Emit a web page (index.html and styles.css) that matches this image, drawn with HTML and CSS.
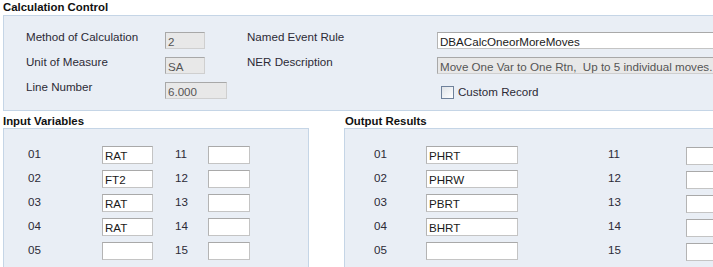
FILE: index.html
```html
<!DOCTYPE html>
<html lang="en">
<head>
    <meta charset="UTF-8">
    <title>Calculation Control</title>
    <link rel="stylesheet" href="styles.css">
</head>
<body>
    <div class="calc-section">
        <h3 class="section-title">Calculation Control</h3>
        <div class="panel calc-panel">
            <label class="field-label">Method of Calculation</label>
            <input class="box box-short" type="text" value="2" disabled>
            <label class="field-label">Named Event Rule</label>
            <input class="box box-wide" type="text" value="DBACalcOneorMoreMoves">

            <label class="field-label">Unit of Measure</label>
            <input class="box box-short" type="text" value="SA" disabled>
            <label class="field-label">NER Description</label>
            <input class="box box-wide" type="text" value="Move One Var to One Rtn,  Up to 5 individual moves." disabled>

            <label class="field-label">Line Number</label>
            <input class="box box-num" type="text" value="6.000" disabled>
            <span></span>
            <label class="check-row">
                <input class="check" type="checkbox">
                <span>Custom Record</span>
            </label>
        </div>
    </div>

    <div class="var-sections">
        <div class="var-col input-col">
            <h3 class="section-title var-title">Input Variables</h3>
            <div class="panel var-panel input-panel">
                <span class="num">01</span><input class="box" type="text" value="RAT"><span class="num">11</span><input class="box" type="text">
                <span class="num">02</span><input class="box" type="text" value="FT2"><span class="num">12</span><input class="box" type="text">
                <span class="num">03</span><input class="box" type="text" value="RAT"><span class="num">13</span><input class="box" type="text">
                <span class="num">04</span><input class="box" type="text" value="RAT"><span class="num">14</span><input class="box" type="text">
                <span class="num">05</span><input class="box" type="text"><span class="num">15</span><input class="box" type="text">
            </div>
        </div>

        <div class="var-col output-col">
            <h3 class="section-title var-title">Output Results</h3>
            <div class="panel var-panel output-panel">
                <span class="num">01</span><input class="box" type="text" value="PHRT"><span class="num">11</span><input class="box" type="text">
                <span class="num">02</span><input class="box" type="text" value="PHRW"><span class="num">12</span><input class="box" type="text">
                <span class="num">03</span><input class="box" type="text" value="PBRT"><span class="num">13</span><input class="box" type="text">
                <span class="num">04</span><input class="box" type="text" value="BHRT"><span class="num">14</span><input class="box" type="text">
                <span class="num">05</span><input class="box" type="text"><span class="num">15</span><input class="box" type="text">
            </div>
        </div>
    </div>
</body>
</html>
```

FILE: styles.css
```css
html, body {
    margin: 0;
    padding: 0;
    overflow: hidden;
    background: #ffffff;
}

body {
    font-family: 'Liberation Sans', Arial, sans-serif;
    font-size: 11.6px;
    color: #2c2a36;
    width: 713px;
    height: 267px;
}

.section-title {
    margin: 0 0 0 3px;
    font-size: 11.4px;
    font-weight: bold;
    line-height: 15px;
    color: #111;
}

.panel {
    background-color: #e9eef5;
    border: 1px solid #c5d5e6;
    box-sizing: border-box;
}

/* calculation control */
.calc-panel {
    margin-left: 3px;
    width: 760px;
    height: 96px;
    padding: 14px 0 0 22px;
    display: grid;
    grid-template-columns: 139px 82px 190px 300px;
    grid-auto-rows: 25px;
    align-items: start;
}

.field-label {
    line-height: 14px;
}

.box {
    font-family: 'Liberation Sans', Arial, sans-serif;
    font-size: 11.6px;
    color: #1a1a1a;
    height: 18px;
    margin: 0;
    padding: 1px 2px 0;
    box-sizing: border-box;
    background: #ffffff;
    border: 1px solid #c4c4c4;
    border-top-color: #a9a9a9;
    border-left-color: #b4b4b4;
    outline: none;
}

.calc-panel .box {
    margin-top: 2px;
    height: 17px;
}

.box:disabled {
    background: #e8e8e8;
    color: #555;
    border-color: #cfcfcf;
    border-top-color: #a8a8a8;
    border-left-color: #a8a8a8;
}

.box-short {
    width: 40px;
}

.box-num {
    width: 62px;
}

.box-wide {
    width: 290px;
}

.check-row {
    display: flex;
    align-items: center;
    gap: 4px;
    margin: 5px 0 0 4px;
    line-height: 14px;
}

.check {
    appearance: none;
    -webkit-appearance: none;
    width: 13px;
    height: 13px;
    margin: 0;
    border: 1px solid #6f819a;
    background: linear-gradient(135deg, #dfe3e8, #ffffff);
    box-sizing: border-box;
}

/* variables */
.var-sections {
    display: flex;
    margin-top: 4px;
}

.var-col {
    flex-shrink: 0;
}

.var-title {
    line-height: 13px;
    margin-left: 0;
}

.input-col {
    margin-left: 3px;
    width: 306px;
}

.output-col {
    margin-left: 35px;
    width: 420px;
}

.output-col .var-title {
    margin-left: 1px;
}

.var-panel {
    height: 150px;
    padding-top: 17px;
    display: grid;
    grid-auto-rows: 24px;
    align-items: start;
}

.input-panel {
    padding-left: 24px;
    grid-template-columns: 74px 73px 33px 42px;
}

.input-panel .box:nth-of-type(odd) {
    width: 51px;
}

.input-panel .box:nth-of-type(even) {
    width: 42px;
}

.output-panel {
    padding-left: 29px;
    grid-template-columns: 52px 182px 78px 60px;
}

.output-panel .box:nth-of-type(odd) {
    width: 92px;
}

.output-panel .box:nth-of-type(even) {
    width: 60px;
    margin-top: 1px;
}

.num {
    line-height: 14px;
    padding-top: 1px;
}
```
